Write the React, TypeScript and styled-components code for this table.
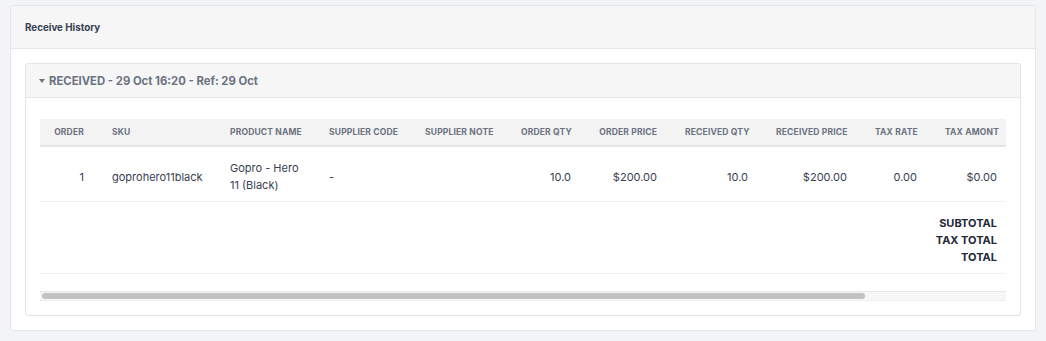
import React from "react";
import styled, { createGlobalStyle } from "styled-components";

const GlobalStyle = createGlobalStyle`
  html, body {
    margin: 0;
    padding: 0;
    background: #f3f4f6;
    font-family: Inter, "Liberation Sans", Arial, sans-serif;
    color: #374151;
  }
`;

const Page = styled.div`
  padding: 5px 10px 12px 10px;
`;

const Card = styled.section`
  background: #ffffff;
  border: 1px solid #e5e7eb;
  border-radius: 3px;
`;

const CardHeader = styled.header`
  height: 42px;
  display: flex;
  align-items: center;
  padding: 0 14px;
  background: #f6f6f7;
  border-bottom: 1px solid #e5e7eb;
  border-radius: 3px 3px 0 0;
  font-size: 9.8px;
  font-weight: 700;
  color: #374151;
`;

const CardBody = styled.div`
  padding: 14px;
`;

const Panel = styled.div`
  border: 1px solid #e2e4e9;
  border-radius: 3px;
  background: #ffffff;
`;

const PanelHeader = styled.div`
  height: 33px;
  display: flex;
  align-items: center;
  gap: 4px;
  padding: 0 13px;
  background: #f6f6f7;
  border-bottom: 1px solid #e5e7eb;
  border-radius: 3px 3px 0 0;
  font-size: 11.3px;
  font-weight: 700;
  color: #6b7280;
`;

const Caret = styled.span`
  display: inline-block;
  width: 0;
  height: 0;
  border-left: 3px solid transparent;
  border-right: 3px solid transparent;
  border-top: 4px solid #6b7280;
  margin-top: 1px;
`;

const PanelBody = styled.div`
  padding: 21px 14px 14px 14px;
`;

const Scroller = styled.div`
  overflow: hidden;
`;

const ScrollTrack = styled.div`
  margin-top: 17px;
  height: 6px;
  padding: 1px 2px;
  background: #f7f7f8;
  border-top: 1px solid #e6e7ea;
  border-bottom: 1px solid #eeeff1;
  display: flex;
  align-items: center;
`;

const ScrollThumb = styled.div`
  height: 6px;
  border-radius: 3px;
  background: #c2c2c4;
`;

const Table = styled.table`
  table-layout: fixed;
  width: 971px;
  border-collapse: collapse;
`;

const HeadCell = styled.th<{ $align?: "left" | "right" }>`
  background: #f3f3f4;
  height: 26px;
  padding: 0 14px;
  border-bottom: 2px solid #e4e5e8;
  text-align: ${(p) => p.$align ?? "left"};
  font-size: 8.5px;
  font-weight: 700;
  letter-spacing: 0.02em;
  color: #6b7280;
  white-space: nowrap;
`;

const Row = styled.tr`
  border-bottom: 1px solid #f1f2f4;
`;

const Cell = styled.td<{ $align?: "left" | "right" }>`
  padding: 13px 14px 7px 14px;
  text-align: ${(p) => p.$align ?? "left"};
  font-size: 11px;
  line-height: 17px;
  color: #374151;
  vertical-align: middle;
`;

const TotalsCell = styled.td`
  padding: 13px 14px 7px 14px;
  text-align: right;
  font-size: 11px;
  line-height: 17px;
  font-weight: 700;
  color: #1f2937;
  white-space: nowrap;
`;

type Align = "left" | "right";

const columns: { label: string; width: number; align: Align }[] = [
  { label: "Order", width: 58, align: "right" },
  { label: "SKU", width: 118, align: "left" },
  { label: "Product Name", width: 99, align: "left" },
  { label: "Supplier Code", width: 96, align: "left" },
  { label: "Supplier Note", width: 96, align: "left" },
  { label: "Order Qty", width: 78, align: "right" },
  { label: "Order Price", width: 86, align: "right" },
  { label: "Received Qty", width: 91, align: "right" },
  { label: "Received Price", width: 99, align: "right" },
  { label: "Tax Rate", width: 70, align: "right" },
  { label: "Tax Amont", width: 80, align: "right" },
];

const lines = [
  {
    order: "1",
    sku: "goprohero11black",
    name: "Gopro - Hero 11 (Black)",
    supplierCode: "-",
    supplierNote: "",
    orderQty: "10.0",
    orderPrice: "$200.00",
    receivedQty: "10.0",
    receivedPrice: "$200.00",
    taxRate: "0.00",
    taxAmount: "$0.00",
  },
];

const visibleShare = 0.855;

export default function App() {
  return (
    <>
      <GlobalStyle />
      <Page>
        <Card>
          <CardHeader>Receive History</CardHeader>
          <CardBody>
            <Panel>
              <PanelHeader>
                <Caret />
                RECEIVED - 29 Oct 16:20 - Ref: 29 Oct
              </PanelHeader>
              <PanelBody>
                <Scroller>
                  <Table>
                    <colgroup>
                      {columns.map((c) => (
                        <col key={c.label} style={{ width: c.width }} />
                      ))}
                    </colgroup>
                    <thead>
                      <tr>
                        {columns.map((c) => (
                          <HeadCell key={c.label} $align={c.align}>
                            {c.label.toUpperCase()}
                          </HeadCell>
                        ))}
                      </tr>
                    </thead>
                    <tbody>
                      {lines.map((l) => (
                        <Row key={l.sku}>
                          <Cell $align="right">{l.order}</Cell>
                          <Cell>{l.sku}</Cell>
                          <Cell>{l.name}</Cell>
                          <Cell>{l.supplierCode}</Cell>
                          <Cell>{l.supplierNote}</Cell>
                          <Cell $align="right">{l.orderQty}</Cell>
                          <Cell $align="right">{l.orderPrice}</Cell>
                          <Cell $align="right">{l.receivedQty}</Cell>
                          <Cell $align="right">{l.receivedPrice}</Cell>
                          <Cell $align="right">{l.taxRate}</Cell>
                          <Cell $align="right">{l.taxAmount}</Cell>
                        </Row>
                      ))}
                      <Row>
                        <TotalsCell colSpan={11}>
                          SUBTOTAL
                          <br />
                          TAX TOTAL
                          <br />
                          TOTAL
                        </TotalsCell>
                      </Row>
                    </tbody>
                  </Table>
                </Scroller>
                <ScrollTrack>
                  <ScrollThumb style={{ width: `${visibleShare * 100}%` }} />
                </ScrollTrack>
              </PanelBody>
            </Panel>
          </CardBody>
        </Card>
      </Page>
    </>
  );
}
